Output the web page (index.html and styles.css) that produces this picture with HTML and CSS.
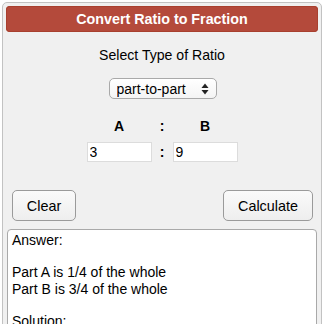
FILE: index.html
```html
<!DOCTYPE html>
<html>
<head>
<meta charset="utf-8">
<link rel="stylesheet" href="styles.css">
</head>
<body>
<div class="page">
  <div class="calc">
    <div class="title">Convert Ratio to Fraction</div>
    <div class="prompt">Select Type of Ratio</div>
    <div class="select-row">
      <span class="select-wrap">
        <select class="select">
          <option>part-to-part</option>
          <option>part-to-whole</option>
        </select>
        <svg class="arrows" width="8" height="12" viewBox="0 0 8 12">
          <path d="M4 0.5 L7.5 5 L0.5 5 Z" fill="#222"/>
          <path d="M4 11.5 L7.5 7 L0.5 7 Z" fill="#222"/>
        </svg>
      </span>
    </div>
    <div class="ratio">
      <div class="lbl">A</div>
      <div class="lbl">:</div>
      <div class="lbl">B</div>
      <input class="num" type="text" value="3">
      <div class="colon">:</div>
      <input class="num" type="text" value="9">
    </div>
    <div class="buttons">
      <button class="btn btn-clear">Clear</button>
      <button class="btn btn-calc">Calculate</button>
    </div>
    <div class="answer">Answer:

Part A is 1/4 of the whole
Part B is 3/4 of the whole

Solution:
</div>
  </div>
</div>
</body>
</html>
```
FILE: styles.css
```css
html, body {
  margin: 0;
  padding: 0;
  background: #ffffff;
  font-family: "Liberation Sans", Arial, sans-serif;
  color: #000;
  overflow: hidden;
}
.page {
  padding: 2px;
  height: 324px;
  box-sizing: border-box;
  overflow: hidden;
}
.calc {
  border: 1px solid #c2c2c2;
  border-radius: 5px;
  background: #f0f0f0;
  padding: 3px 3px 0 3px;
  height: 340px;
  box-sizing: border-box;
}
.title {
  height: 26px;
  line-height: 26px;
  background: #b44a3b;
  border-radius: 4px;
  color: #fff;
  font-weight: bold;
  font-size: 14.3px;
  text-align: center;
  box-shadow: inset 0 0 0 1px #a8402f;
}
.prompt {
  margin-top: 15px;
  font-size: 14.1px;
  line-height: 16px;
  text-align: center;
}
.select-row {
  margin-top: 15px;
  display: flex;
  justify-content: center;
}
.select-wrap {
  position: relative;
  display: inline-block;
  margin-left: 1px;
}
.select {
  -webkit-appearance: none;
  appearance: none;
  width: 108px;
  height: 21px;
  box-sizing: border-box;
  border: 1px solid #a9a9a9;
  border-radius: 5px;
  background: linear-gradient(#ffffff, #f4f4f4);
  font-family: "Liberation Sans", Arial, sans-serif;
  font-size: 14px;
  color: #000;
  padding: 0 0 0 7px;
  margin: 0;
  outline: none;
}
.arrows {
  position: absolute;
  right: 8px;
  top: 5px;
  pointer-events: none;
}
.ratio {
  margin-top: 19px;
  display: grid;
  grid-template-columns: 65px 21px 65px;
  justify-content: center;
  row-gap: 8px;
}
.lbl {
  font-weight: bold;
  font-size: 14px;
  line-height: 16px;
  text-align: center;
}
.num {
  width: 65px;
  height: 20px;
  box-sizing: border-box;
  border: 1px solid #dcdcdc;
  background: #fff;
  font-family: "Liberation Sans", Arial, sans-serif;
  font-size: 14px;
  padding: 0 2px;
  margin: 0;
  color: #000;
  outline: none;
}
.colon {
  font-weight: bold;
  font-size: 14px;
  line-height: 20px;
  text-align: center;
}
.buttons {
  margin-top: 28px;
  display: flex;
  justify-content: space-between;
  padding: 0 5px 0 6px;
}
.btn {
  height: 31px;
  padding: 0;
  border: 1px solid #9a9a9a;
  border-radius: 5px;
  background: linear-gradient(#fafafa, #eeeeee);
  font-family: "Liberation Sans", Arial, sans-serif;
  font-size: 14.4px;
  color: #000;
  margin: 0;
  text-align: center;
}
.btn-clear {
  width: 64px;
}
.btn-calc {
  width: 90px;
}
.answer {
  margin: 8px 1px 0 1px;
  height: 130px;
  border: 1px solid #a9a9a9;
  border-radius: 4px;
  background: #fff;
  padding: 2px 4px;
  font-size: 14px;
  line-height: 16.2px;
  white-space: pre-line;
}
```
